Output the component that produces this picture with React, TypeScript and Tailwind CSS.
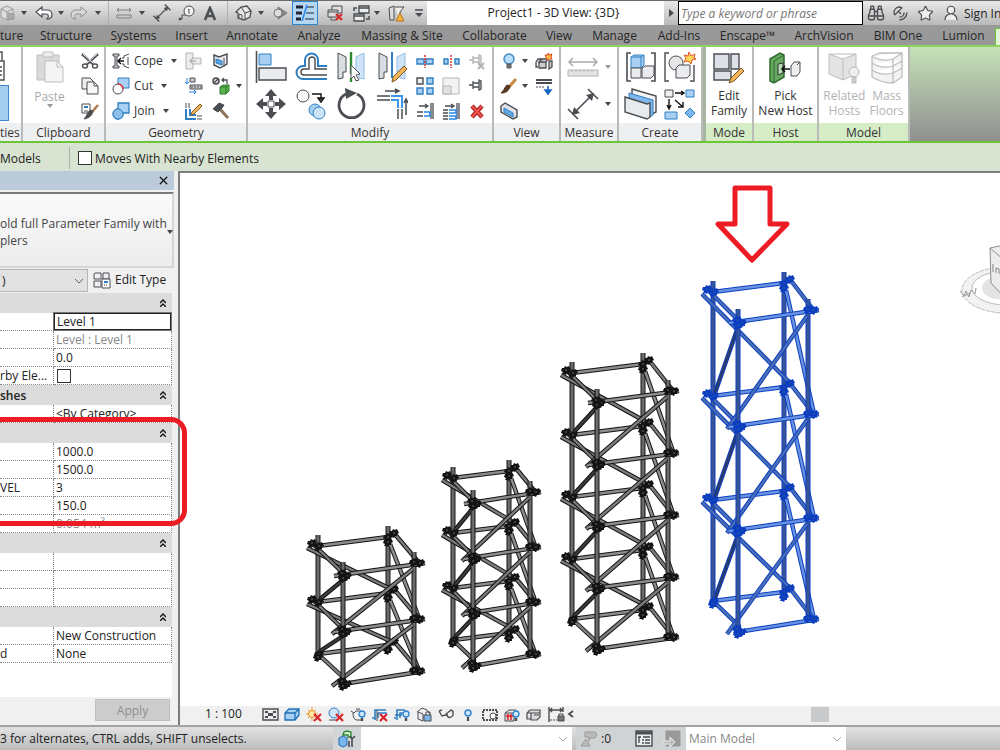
import React from 'react';
import { Star, UserRound, Binoculars, SatelliteDish, X } from 'lucide-react';

const INK = '#4a4d52';
const BLUE = '#2f7fc4';
const SKY = '#a9d0f2';
const PALE = '#e9ebee';
const OFF = '#b4b4b4';

interface IconProps {
    w?: number;
    h?: number;
    children: React.ReactNode;
}

const Icon: React.FC<IconProps> = ({ w = 16, h = w, children }) => (
    <svg width={w} height={h} viewBox={`0 0 ${w} ${h}`} fill="none" stroke={INK} className="shrink-0" aria-hidden="true">
        {children}
    </svg>
);

const Caret = ({ light = false }: { light?: boolean }) => (
    <svg width="6" height="4" viewBox="0 0 6 4" className="shrink-0" aria-hidden="true">
        <path d="M0 0h6L3 4z" fill={light ? '#9a9a9a' : '#444'} />
    </svg>
);

// --- Quick access icons ---
const BoxGrey = () => (
    <Icon>
        <path d="M7 1l6 3v8l-6 3-6-3V4z M1 4l6 3 6-3 M7 7v8" stroke="#999" fill="#ddd" />
        <path d="M8 8l6 1v5l-6 1z" fill="#aaa" stroke="#999" />
    </Icon>
);
const Undo = () => (
    <Icon w={18} h={14}>
        <path d="M1 6l6-5v3h5c3 0 5 2 5 5 0 2-1 3-3 4h-2c2-2 2-5-1-5H7v3z" fill="#fff" strokeWidth="1.2" />
    </Icon>
);
const Redo = () => (
    <Icon w={18} h={14}>
        <path d="M17 6l-6-5v3H6C3 4 1 6 1 9c0 2 1 3 3 4h2C4 11 4 8 7 8h4v3z" stroke="#8d8d8d" fill="#d8d8d8" />
    </Icon>
);
const MeasureGrey = () => (
    <Icon w={18} h={12}>
        <path d="M2 3h14M4 1L2 3l2 2M14 1l2 2-2 2M2 8h14v3H2z" stroke="#808080" />
    </Icon>
);
const Dimension = ({ size = 18 }: { size?: number }) => (
    <svg width={size} height={size} viewBox="0 0 32 32" fill="none" stroke={INK} strokeWidth={size > 20 ? 1.6 : 2.4} aria-hidden="true">
        <path d="M6 26L26 6M1 21l10 10M21 1l10 10" />
        <path d="M5 27l2-8 6 6zM27 5l-2 8-6-6z" fill={INK} stroke="none" />
    </svg>
);
const Tag = () => (
    <Icon w={18} h={16}>
        <path d="M1 14h3v-4h4" />
        <circle cx="11" cy="6" r="5" fill="#f3f3f3" />
        <path d="M10 5l1-1v5" />
        <circle cx="2" cy="14" r="1" fill={INK} />
    </Icon>
);
const LetterA = () => (
    <Icon w={14} h={15}>
        <path d="M2 14L7 2l5 12M4 10h6" strokeWidth="2.6" />
    </Icon>
);
const House = () => (
    <Icon w={17} h={16}>
        <path d="M1 7l5-5 6-1 4 5-1 6-6 3-6-2V8z" fill="#e8e8e8" strokeWidth="1.3" />
        <path d="M1 7l5-5 4 6v7M10 8l6-2M4 13V9l3 1v4" />
    </Icon>
);
const Section = () => (
    <Icon w={14} h={16}>
        <path d="M5 2l9 6-9 6z" fill="#888" stroke="#777" />
        <circle cx="5" cy="8" r="4" fill="#ddd" stroke="#777" />
    </Icon>
);
const ThinLines = () => (
    <Icon w={20} h={18}>
        <path d="M1 3h7M1 9h6M1 15h5" strokeWidth="3" stroke="#223" />
        <path d="M12 3h7M11 9h8M10 15h9" stroke="#223" />
        <path d="M12 1L7 17" stroke="#2585ea" strokeWidth="1.5" />
    </Icon>
);
const CloseWindows = () => (
    <Icon w={18} h={17}>
        <path d="M5 5V1h10v7h-3M1 5h10v7H1zM1 7h10M4 12v3h5" fill="#ddd" />
        <path d="M9 9l6 6M15 9l-6 6" stroke="#d92d2d" strokeWidth="2.4" />
    </Icon>
);
const SwitchWindows = () => (
    <Icon w={18} h={17}>
        <path d="M6 1h10v7H6zM1 9h10v7H1z" fill="#eee" strokeWidth="1.3" />
        <path d="M6 3h10M1 11h10M1 6V3h3M16 11v3h-3" strokeWidth="1.5" />
    </Icon>
);
const FilterWarn = () => (
    <Icon w={18} h={17}>
        <path d="M1 3l5-2v14H2z" fill="#ddd" />
        <path d="M7 2h9l-4 5v7" fill="#eee" />
        <path d="M12 8l4 8H8z" fill="#f7b23b" stroke="#b87414" />
    </Icon>
);

// --- Ribbon icons ---
const PasteIcon = () => (
    <Icon w={28} h={32}>
        <path d="M1 4h22v25H1z" fill="#d9d9d9" stroke="#bebebe" />
        <path d="M7 1h10v5H7z" fill="#eee" stroke="#bebebe" />
        <path d="M9 10h12l6 6v15H9z" fill="#f4f4f4" stroke="#bebebe" />
        <path d="M21 10v6h6" stroke="#bebebe" />
    </Icon>
);
const ScissorsIcon = () => (
    <Icon w={18}>
        <path d="M1 2l11 10M17 2L6 12" strokeWidth="2.4" />
        <path d="M2 2l10 9M16 2L6 11" stroke="#f4f4f4" />
        <ellipse cx="4" cy="14" rx="2.500" ry="2" strokeWidth="1.4" />
        <ellipse cx="14" cy="14" rx="2.500" ry="2" strokeWidth="1.4" />
    </Icon>
);
const CopyIcon = () => (
    <Icon w={18}>
        <path d="M1 1h8l3 3v8H1z" fill="#eee" />
        <path d="M6 5h7l4 4v8H6z" fill="#f7f7f7" />
        <path d="M13 5v4h4" />
    </Icon>
);
const MatchIcon = () => (
    <Icon w={18}>
        <path d="M1 2h8v9H1z" fill="#fff" />
        <path d="M3 4h4v2H3z" fill={BLUE} stroke="none" />
        <path d="M3 9h4" />
        <path d="M17 3l-6 7" strokeWidth="2.5" stroke="#b37a47" />
        <path d="M12 9c-1 5-4 7-9 8 3-3 3-6 6-9z" fill={INK} />
    </Icon>
);
const CopeIcon = () => (
    <Icon w={18}>
        <path d="M1 2h6v2H5v10h2v2H1v-2h2V4H1z" fill="#cfd2d6" />
        <path d="M17 2l-5 2v2h-2M10 12h2v2l5 2M16 5v8" />
        <path d="M6 9h6M9 6L6 9l3 3" stroke="#111" strokeWidth="1.4" />
    </Icon>
);
const CutIcon = () => (
    <Icon w={18}>
        <path d="M6 1h11v10H6z" fill={SKY} stroke={BLUE} />
        <circle cx="6" cy="12" r="5" fill="#fff" />
        <path d="M6 7a5 5 0 0 1 5 5" stroke="#e23030" strokeWidth="1.6" />
    </Icon>
);
const JoinIcon = () => (
    <Icon w={18}>
        <path d="M6 1h11v10h-6a5 5 0 1 1-5-4z" fill={SKY} stroke={BLUE} strokeWidth="1.3" />
        <circle cx="6" cy="12" r="5" fill="#8fc0ec" stroke={BLUE} />
    </Icon>
);
const CopeGrey = () => (
    <Icon w={18}>
        <path d="M1 1h7v5h8v6H8v5H1z" fill="#ededed" stroke={OFF} />
        <path d="M5 9h6M8 6L5 9l3 3" stroke={OFF} strokeWidth="1.4" />
    </Icon>
);
const SplitFace = () => (
    <Icon w={18}>
        <path d="M2 3l5 2 8-3v10l-7 4-6-3z" fill={PALE} strokeWidth="1.4" />
        <path d="M4 7l6 2v4l-6-2z" fill="#5aa5e6" stroke={BLUE} />
        <path d="M12 6v9" />
    </Icon>
);
const BeamJoin = () => (
    <Icon w={18}>
        <path d="M5 1h5v4H5zM5 8h12v4H5z" fill="#ccc" />
        <path d="M2 1v6M0 5l2 2 2-2M4 15h7M9 13l2 2-2 2" stroke="#2585ea" />
        <path d="M6 10h10" strokeDasharray="2 1" />
    </Icon>
);
const PaintIcon = () => (
    <Icon w={18}>
        <circle cx="4" cy="4" r="3" fill="#ddd" strokeWidth="1.5" />
        <path d="M2 6l4-4M10 3h5v4M12 1l-2 2 2 2" strokeWidth="1.3" />
        <path d="M8 10l3-2h6v6l-3 3H8z" fill="#5db34f" stroke="#2d7a28" />
        <path d="M8 10h6v7M14 10l3-2" stroke="#2d7a28" />
    </Icon>
);
const WallJoin = () => (
    <Icon w={18}>
        <path d="M1 1v5M4 1v5M12 14h5M12 17h5" />
        <path d="M1 7v10h10M5 7v6h6" stroke={BLUE} strokeWidth="2" />
        <path d="M15 2l2 2-8 8-3 1 1-3z" fill="#f1b55a" stroke="#8a5d22" />
    </Icon>
);
const HammerIcon = () => (
    <Icon w={18}>
        <path d="M8 7l8 9" stroke="#8b7358" strokeWidth="3" />
        <path d="M1 7l6-6 5 2-2 3-4 4z" fill={INK} />
    </Icon>
);

const AlignIcon = () => (
    <Icon w={32}>
        <path d="M1.500 0v32" strokeWidth="1.6" />
        <path d="M4 3h12v11H4z" fill={SKY} stroke={BLUE} />
        <path d="M4 17h27v12H4z" fill={PALE} strokeWidth="1.4" />
    </Icon>
);
const OffsetIcon = () => (
    <Icon w={32}>
        <path d="M32 28H8a6 6 0 0 1 0-13h2V9a6 6 0 0 1 13 0v6h9" strokeWidth="2" stroke={BLUE} />
        <path d="M32 24H9a3 3 0 0 1 0-6h5V9a3 3 0 0 1 6 0v9h12" strokeWidth="1.4" />
    </Icon>
);
const MirrorPick = () => (
    <Icon w={32}>
        <path d="M3 2l8 4v15H8v6l-5 1z" fill="#d9dce0" />
        <path d="M29 2l-8 4v15h3v6l5 1z" fill="#cfe5f7" stroke="#8fbde4" />
        <path d="M16 1v30" stroke="#2f8c2f" strokeWidth="2.4" strokeDasharray="22 4" />
        <path d="M16 14l9 9-4 1 3 5-3 1-2-5-3 3z" fill="#fff" />
    </Icon>
);
const MirrorDraw = () => (
    <Icon w={32}>
        <path d="M3 2l8 4v15H8v6l-5 1z" fill="#d9dce0" />
        <path d="M29 2l-8 4v15h3v6l5 1z" fill="#cfe5f7" stroke="#8fbde4" />
        <path d="M16 1v26" stroke={BLUE} strokeWidth="2" />
        <path d="M28 15l3 3-11 11-4 2 1-5z" fill="#f3b65b" stroke="#7c531e" />
    </Icon>
);
const MoveIcon = () => (
    <Icon w={32}>
        <path d="M16 1l6 7h-4v4h-4V8h-4zM16 31l6-7h-4v-4h-4v4h-4zM1 16l7-6v4h4v4H8v4zM31 16l-7-6v4h-4v4h4v4z" fill={INK} stroke="none" />
        <path d="M13 13h6v6h-6z" fill="#fff" />
    </Icon>
);
const CopyBig = () => (
    <Icon w={32}>
        <circle cx="8" cy="8" r="6" fill="#fafafa" />
        <path d="M17 6h9v6M23 10l3 4 3-4z" fill="none" stroke="#111" strokeWidth="1.4" />
        <circle cx="20" cy="22" r="6" fill={SKY} stroke={BLUE} />
        <circle cx="24" cy="25" r="6" fill="#cbe3f7" stroke={BLUE} />
    </Icon>
);
const RotateIcon = () => (
    <Icon w={32}>
        <path d="M22 6a12.500 12.500 0 1 1-11 0" strokeWidth="2.8" />
        <path d="M10 0l12 5-11 6z" fill={INK} stroke="none" />
    </Icon>
);
const TrimIcon = () => (
    <Icon w={32}>
        <path d="M9 3h13M19 1l4 2-4 2M1 8h13M1 12h13" strokeWidth="1.5" />
        <path d="M15 8h11v12M15 12h7v8" stroke="#3b97e8" strokeWidth="2" />
        <path d="M26 21v10M22 21v10M30 27V12M28 15l2-4 2 4" strokeWidth="1.5" />
    </Icon>
);
const SplitIcon = ({ gap = false }: { gap?: boolean }) => (
    <Icon w={18}>
        {gap ? (
            <path d="M2 7h4v5H2zM13 7h4v5h-4z" fill={SKY} stroke={BLUE} strokeWidth="1.4" />
        ) : (
            <path d="M1 7h7v5H1zM10 7h7v5h-7z" fill={SKY} stroke={BLUE} strokeWidth="1.4" />
        )}
        <path d="M9 3v13" stroke="#e23030" strokeWidth="1.5" strokeDasharray="2 1" />
    </Icon>
);
const PinIcon = ({ off = false }: { off?: boolean }) => (
    <Icon w={18}>
        <path d="M1 8h4M5 4v8M5 6h6M5 10h6M11 3l2 1v8l-2 1z" stroke={off ? OFF : INK} fill={off ? '#eee' : '#ddd'} strokeWidth="1.3" />
        {off && <path d="M10 11l6 6M16 11l-6 6" stroke={OFF} strokeWidth="2" />}
    </Icon>
);
const ArrayIcon = () => (
    <Icon w={18}>
        <path d="M1 1h6v6H1z" fill="#eee" strokeWidth="1.4" />
        <path d="M11 1h6v6h-6zM1 11h6v6H1zM11 11h6v6h-6z" fill={SKY} stroke={BLUE} strokeWidth="1.4" />
    </Icon>
);
const ScaleIcon = () => (
    <Icon w={18}>
        <path d="M1 1h16v16H1z" fill="#f3f3f3" stroke={OFF} />
        <path d="M1 9h8v8H1z" fill="#e2e2e2" stroke={OFF} />
    </Icon>
);
const ExtendIcon = ({ multi = false }: { multi?: boolean }) => (
    <Icon w={18}>
        <path d="M15 1v16M17 1v16M3 4h9M9 2l3 2-3 2" strokeWidth="1.3" />
        <path d={multi ? 'M1 8h5M1 11h5M1 14h5M1 17h5' : 'M1 10h6M1 14h6'} strokeWidth="1.3" />
        <path d={multi ? 'M7 8h7v3H7M7 14h7v3H7' : 'M8 10h6v4H8'} stroke="#2585ea" strokeWidth="1.6" />
    </Icon>
);
const DeleteIcon = () => (
    <Icon w={16}>
        <path d="M3 3l10 11M13 3L3 14" stroke="#a51c1c" strokeWidth="4.4" />
        <path d="M3 3l10 11M13 3L3 14" stroke="#ef5350" strokeWidth="2.4" />
    </Icon>
);

const BulbIcon = () => (
    <Icon w={18}>
        <circle cx="9" cy="7" r="5" fill="#b9dcf8" stroke="#3f87c6" strokeWidth="1.4" />
        <path d="M7 12h4v4H7z" fill="#777" stroke="#555" />
    </Icon>
);
const BrushIcon = () => (
    <Icon w={18}>
        <path d="M16 2l-7 8" stroke="#c88a45" strokeWidth="3" />
        <path d="M10 9c-1 5-4 7-9 7 3-2 3-5 6-8z" fill="#5a3d24" stroke="#4a2f18" />
    </Icon>
);
const ExplodeBox = () => (
    <Icon w={18}>
        <path d="M1 10l2-3h4M1 10v5h2M4 10l3-3h6l-2 3zM4 10h7v6H4zM14 9h3v6l-3 2z" fill="#ccc" strokeWidth="1.3" />
        <path d="M13 1l1 2 3-1-1 3 1 2-3 0-2 1-1-3-1-2 3 0z" fill="#f9c045" stroke="#e0431c" />
    </Icon>
);
const LineWork = () => (
    <Icon w={18}>
        <path d="M1 3h16M1 6h16" strokeWidth="2" />
        <path d="M1 10h8" strokeDasharray="2 1" />
        <path d="M13 9v5M10 13l3 4 3-4z" stroke="#1668c7" strokeWidth="1.6" fill="#1668c7" />
    </Icon>
);
const SelBox = () => (
    <Icon w={18}>
        <path d="M1 4l4-3 12 7v7l-4 2L1 10z" fill="#dfe3e8" strokeWidth="1.4" />
        <path d="M4 6l9 5v4L4 10z" fill="#62aaea" stroke={BLUE} />
    </Icon>
);
const RulerBig = () => (
    <Icon w={32}>
        <path d="M2 11h28M6 7l-4 4 4 4M26 7l4 4-4 4" stroke="#aaa" strokeWidth="1.5" />
        <path d="M1 19h30v6H1zM5 19v2M9 19v2M13 19v2M17 19v2M21 19v2M25 19v2" stroke={OFF} fill="#e4e4e4" />
    </Icon>
);
const GroupIcon = () => (
    <Icon w={32}>
        <path d="M6 2H2v28h4M26 2h4v28h-4" strokeWidth="1.6" />
        <path d="M6 6l3-2h10v10l-3 3H6zM6 6h10v11M16 6l3-2" fill={SKY} stroke={BLUE} />
        <path d="M6 17h10v10H6zM17 17l3-2h9v9l-3 3h-9z" fill={PALE} />
    </Icon>
);
const SimilarIcon = () => (
    <Icon w={32}>
        <path d="M5 2H1v28h4M26 30h4V14" strokeWidth="1.4" />
        <circle cx="12" cy="12" r="7" fill="#e6e6e6" />
        <path d="M12 17l3-3h11v10l-3 3H12z" fill={PALE} />
        <path d="M25 1l2 4 4-2-1 4 2 1-4 1-1 4-3-3-4 1 2-4-2-3 4 1z" fill="#ffd75a" stroke="#e0562c" />
    </Icon>
);
const AssemblyIcon = () => (
    <Icon w={34} h={32}>
        <path d="M8 1l24 7v16l-4 2L8 18z" fill="#f3f3f3" strokeWidth="1.4" />
        <path d="M5 5l24 7v15l-3 2L5 21z" fill="#7cb8ed" stroke={BLUE} />
        <path d="M1 9l22 7 3-1v14l-3 2L1 24z" fill="#e8ebee" strokeWidth="1.4" />
    </Icon>
);
const PartsIcon = () => (
    <Icon w={32}>
        <path d="M1 2h8v7H1z" fill="#eee" />
        <path d="M22 2h8v7h-8zM1 24h12v7H1z" fill={SKY} stroke={BLUE} />
        <path d="M26 20l5 5-5 5-5-5z" fill="#7cb8ed" stroke={BLUE} />
        <path d="M11 5h8M17 3l3 2-3 2M5 11v9M3 17l2 4 2-4M11 12l8 7M19 14v5h-5" stroke="#111" strokeWidth="1.4" />
    </Icon>
);
const EditFamilyIcon = () => (
    <Icon w={32}>
        <path d="M1 2h15v15H1zM18 2h8v15h-8zM1 19h17v9H1z" fill="#dde0e6" strokeWidth="1.4" />
        <path d="M28 16l3 3-10 10-5 2 2-5z" fill="#f3b65b" stroke="#7c531e" />
    </Icon>
);
const HostIcon = () => (
    <Icon w={34} h={32}>
        <path d="M2 7l10-6 4 2v22L6 31l-4-2z" fill="#67a863" stroke="#2f6b2e" strokeWidth="1.5" />
        <path d="M6 9l10-6M6 9v22" stroke="#2f6b2e" />
        <path d="M10 12l5-1v10l-5 2z" fill="#b8d9b4" stroke="#333" />
        <path d="M14 17h8M17 14l-3 3 3 3" stroke="#111" strokeWidth="1.6" />
        <path d="M23 14l3-4h6v10l-3 4h-6zM29 13l3-3" fill="#eee" />
    </Icon>
);
const RelatedIcon = () => (
    <Icon w={32}>
        <path d="M1 2l14 5 13-5v20l-13 6-14-6z" fill="#e3e3e3" stroke="#bdbdbd" />
        <path d="M1 2h27M15 7v21" stroke="#bdbdbd" />
        <circle cx="26" cy="20" r="5" fill="#eee" stroke="#bbb" />
        <path d="M24 25h4v6h-4z" fill="#ccc" stroke="#bbb" />
    </Icon>
);
const MassIcon = () => (
    <Icon w={32}>
        <path d="M1 4l8-3h22v24l-9 6C14 31 6 28 1 25zM1 4c6 4 14 5 21 3l9-6M22 7v24M1 11c6 4 14 5 21 3l9-5M1 18c6 4 14 5 21 3l9-5" fill="#f3f3f3" stroke="#bdbdbd" strokeWidth="1.3" />
    </Icon>
);

// --- Layout pieces ---
const Cell = ({ w, children }: { w: string; children?: React.ReactNode }) => (
    <button type="button" className={`${w} h-full flex shrink-0 items-center justify-center`}>
        {children}
    </button>
);

const Divider = ({ w }: { w: string }) => (
    <div className={`${w} flex h-full shrink-0 justify-center`}>
        <div className="w-px bg-[#b0b0b0]" />
    </div>
);

interface PanelProps {
    title: string;
    w: string;
    green?: boolean;
    children?: React.ReactNode;
}

const Panel: React.FC<PanelProps> = ({ title, w, green, children }) => (
    <section className={`${w} flex shrink-0 flex-col border-r-2 border-[#b9bbb9] bg-white`}>
        <div className="flex h-[77px] items-start justify-center pt-px">{children}</div>
        <h2 className={`h-[18px] overflow-hidden text-center leading-[20px] text-[#333] ${green ? 'bg-[#d5ecc7]' : 'bg-[#eeeff0]'}`}>
            {title}
        </h2>
    </section>
);

const Col = ({ w, children }: { w: string; children: React.ReactNode }) => (
    <div className={`${w} flex h-[75px] shrink-0 flex-col`}>
        {React.Children.map(children, (child) => (
            <div className="flex min-h-0 flex-1 items-center justify-center">{child}</div>
        ))}
    </div>
);

const Tool = ({ children }: { children: React.ReactNode }) => (
    <button type="button" className="flex items-center">
        {children}
    </button>
);

const BigTool = ({ icon, lines, off }: { icon: React.ReactNode; lines: string[]; off?: boolean }) => (
    <button type="button" className={`flex flex-col items-center pt-1 ${off ? 'text-[#b3b3b3]' : 'text-[#333]'}`}>
        <span className="mb-1">{icon}</span>
        {lines.map((line) => (
            <span key={line} className="leading-[15px] whitespace-nowrap">{line}</span>
        ))}
    </button>
);

const tabs = [
    { name: 'ture', w: 'w-[31px]' },
    { name: 'Structure', w: 'w-[70px]' },
    { name: 'Systems', w: 'w-[65px]' },
    { name: 'Insert', w: 'w-[51px]' },
    { name: 'Annotate', w: 'w-[70px]' },
    { name: 'Analyze', w: 'w-[64px]' },
    { name: 'Massing & Site', w: 'w-[102px]' },
    { name: 'Collaborate', w: 'w-[83px]' },
    { name: 'View', w: 'w-[46px]' },
    { name: 'Manage', w: 'w-[65px]' },
    { name: 'Add-Ins', w: 'w-[64px]' },
    { name: 'Enscape™', w: 'w-[73px]' },
    { name: 'ArchVision', w: 'w-[80px]' },
    { name: 'BIM One', w: 'w-[68px]' },
    { name: 'Lumion', w: 'w-[63px]' },
];

const TitleBar = () => (
    <header className="flex h-[25px] border-t border-[#6b6b6b] bg-linear-to-b from-[#e9e9e9] to-[#b9b9b9]">
        <Cell w="w-[16px]"><BoxGrey /></Cell>
        <Cell w="w-[16px]"><Caret /></Cell>
        <Cell w="w-[23px]"><Undo /></Cell>
        <Cell w="w-[12px]"><Caret /></Cell>
        <Cell w="w-[24px]"><Redo /></Cell>
        <Cell w="w-[14px]"><Caret /></Cell>
        <Divider w="w-[6px]" />
        <Cell w="w-[26px]"><MeasureGrey /></Cell>
        <Cell w="w-[10px]"><Caret /></Cell>
        <Cell w="w-[29px]"><Dimension /></Cell>
        <Cell w="w-[22px]"><Tag /></Cell>
        <Cell w="w-[24px]"><LetterA /></Cell>
        <Divider w="w-[10px]" />
        <Cell w="w-[22px]"><House /></Cell>
        <Cell w="w-[14px]"><Caret /></Cell>
        <Cell w="w-[24px]"><Section /></Cell>
        <Cell w="w-[26px] border border-[#2f84cf] bg-[#b5d6f2]"><ThinLines /></Cell>
        <Cell w="w-[36px]"><CloseWindows /></Cell>
        <Cell w="w-[16px]"><SwitchWindows /></Cell>
        <Cell w="w-[14px]"><Caret /></Cell>
        <Cell w="w-[26px]"><FilterWarn /></Cell>
        <Cell w="w-[17px]">
            <Icon w={8} h={8}><path d="M0 1h8" strokeWidth="1.5" /><path d="M0 4h8L4 8z" fill={INK} stroke="none" /></Icon>
        </Cell>
        <h1 className="min-w-0 flex-1 bg-white pl-4 text-center leading-[23px] whitespace-nowrap text-[#222]">Project1 - 3D View: {'{3D}'}</h1>
        <Cell w="w-[14px]">
            <Icon w={5} h={8}><path d="M0 0l5 4-5 4z" fill={INK} stroke="none" /></Icon>
        </Cell>
        <input
            aria-label="Search help"
            placeholder="Type a keyword or phrase"
            className="w-[185px] shrink-0 border border-black bg-white px-[2px] italic outline-none placeholder:text-[#777]"
        />
        <Cell w="w-[25px]"><Binoculars size={18} strokeWidth={1.8} color={INK} /></Cell>
        <Cell w="w-[25px]"><SatelliteDish size={17} strokeWidth={1.8} color={INK} className="rotate-90" /></Cell>
        <Cell w="w-[25px]"><Star size={17} strokeWidth={1.6} color={INK} fill="#eee" /></Cell>
        <Cell w="w-[25px]"><UserRound size={18} strokeWidth={1.6} color={INK} fill="#eee" /></Cell>
        <button type="button" className="w-[37px] shrink-0 overflow-hidden pl-px text-left whitespace-nowrap text-[#222]">Sign In</button>
    </header>
);

const Ribbon = () => (
    <div className="flex h-[98px] border-y-2 border-t-[#8cd45f] border-b-[#6cc534] bg-linear-to-b from-[#c5e2b6] to-[#8f8f8f]">
        <section className="flex w-[23px] shrink-0 flex-col border-r-2 border-[#b9bbb9] bg-white">
            <div className="flex h-[77px] flex-col">
                <Icon w={12} h={38}>
                    <path d="M0 5h2v8M0 14h4v19H0M0 20h2M0 24h2M0 28h2" strokeWidth="1.4" />
                </Icon>
                <button type="button" aria-label="Properties" className="h-[36px] w-[9px] border border-l-0 border-[#3b8ad0] bg-[#a5cdf0]" />
            </div>
            <h2 className="h-[18px] overflow-hidden bg-[#eeeff0] text-left leading-[20px] text-[#333]">ties</h2>
        </section>
        <Panel title="Clipboard" w="w-[83px]">
            <div className="flex w-[52px] justify-center">
                <button type="button" className="flex flex-col items-center pt-[3px] text-[#a9a9a9]">
                    <PasteIcon />
                    <span className="mt-[6px] leading-[15px]">Paste</span>
                    <Caret light />
                </button>
            </div>
            <Col w="w-[28px]">
                <Tool><ScissorsIcon /></Tool>
                <Tool><CopyIcon /></Tool>
                <Tool><MatchIcon /></Tool>
            </Col>
        </Panel>
        <Panel title="Geometry" w="w-[142px]">
            <div className="flex h-[75px] w-[72px] shrink-0 flex-col pl-[4px] text-[#333]">
                {[
                    { name: 'Cope', icon: <CopeIcon /> },
                    { name: 'Cut', icon: <CutIcon /> },
                    { name: 'Join', icon: <JoinIcon /> },
                ].map((item) => (
                    <button key={item.name} type="button" className="flex h-[25px] items-center gap-1">
                        {item.icon}
                        <span className="pr-1">{item.name}</span>
                        <Caret />
                    </button>
                ))}
            </div>
            <Col w="w-[28px]">
                <Tool><CopeGrey /></Tool>
                <Tool><BeamJoin /></Tool>
                <Tool><WallJoin /></Tool>
            </Col>
            <Col w="w-[26px]">
                <Tool><SplitFace /></Tool>
                <Tool><PaintIcon /></Tool>
                <Tool><HammerIcon /></Tool>
            </Col>
            <Col w="w-[10px]"><Caret /></Col>
        </Panel>
        <Panel title="Modify" w="w-[246px]">
            <Col w="w-[41px]"><Tool><AlignIcon /></Tool><Tool><MoveIcon /></Tool></Col>
            <Col w="w-[40px]"><Tool><OffsetIcon /></Tool><Tool><CopyBig /></Tool></Col>
            <Col w="w-[40px]"><Tool><MirrorPick /></Tool><Tool><RotateIcon /></Tool></Col>
            <Col w="w-[41px]"><Tool><MirrorDraw /></Tool><Tool><TrimIcon /></Tool></Col>
            <Col w="w-[26px]"><Tool><SplitIcon /></Tool><Tool><ArrayIcon /></Tool><Tool><ExtendIcon /></Tool></Col>
            <Col w="w-[26px]"><Tool><SplitIcon gap /></Tool><Tool><ScaleIcon /></Tool><Tool><ExtendIcon multi /></Tool></Col>
            <Col w="w-[26px]"><Tool><PinIcon off /></Tool><Tool><PinIcon /></Tool><Tool><DeleteIcon /></Tool></Col>
        </Panel>
        <Panel title="View" w="w-[67px]">
            <div className="flex h-[75px] w-[35px] shrink-0 flex-col pl-1">
                <button type="button" className="flex h-[25px] items-center gap-1"><BulbIcon /><Caret /></button>
                <button type="button" className="flex h-[25px] items-center gap-1"><BrushIcon /><Caret /></button>
                <button type="button" className="flex h-[25px] items-center"><SelBox /></button>
            </div>
            <Col w="w-[26px]">
                <Tool><ExplodeBox /></Tool>
                <Tool><LineWork /></Tool>
                <span />
            </Col>
        </Panel>
        <Panel title="Measure" w="w-[58px]">
            <Col w="w-[38px]"><Tool><RulerBig /></Tool><Tool><Dimension size={32} /></Tool></Col>
            <Col w="w-[12px]"><Caret light /><Caret /></Col>
        </Panel>
        <Panel title="Create" w="w-[84px]">
            <Col w="w-[40px]"><Tool><GroupIcon /></Tool><Tool><AssemblyIcon /></Tool></Col>
            <Col w="w-[38px]"><Tool><SimilarIcon /></Tool><Tool><PartsIcon /></Tool></Col>
        </Panel>
        <div className="w-[3px] shrink-0 bg-[#a9b5a3]" />
        <Panel title="Mode" w="w-[48px]" green>
            <BigTool icon={<EditFamilyIcon />} lines={['Edit', 'Family']} />
        </Panel>
        <Panel title="Host" w="w-[65px]" green>
            <BigTool icon={<HostIcon />} lines={['Pick', 'New Host']} />
        </Panel>
        <Panel title="Model" w="w-[91px]" green>
            <div className="flex gap-1">
                <BigTool icon={<RelatedIcon />} lines={['Related', 'Hosts']} off />
                <BigTool icon={<MassIcon />} lines={['Mass', 'Floors']} off />
            </div>
        </Panel>
    </div>
);

// --- Properties palette ---
interface Row {
    head?: boolean;
    name?: string;
    value?: React.ReactNode;
    muted?: boolean;
}

const rows: Row[] = [
    { head: true },
    { value: 'level' },
    { value: 'Level : Level 1', muted: true },
    { value: '0.0' },
    { name: 'rby Ele...', value: 'check' },
    { head: true, name: 'shes' },
    { value: '<By Category>' },
    { head: true },
    { value: '1000.0' },
    { value: '1500.0' },
    { name: 'VEL', value: '3' },
    { value: '150.0' },
    { value: '0.054 m³', muted: true },
    { head: true },
    {},
    {},
    {},
    { head: true },
    { value: 'New Construction' },
    { name: 'd', value: 'None' },
];

const DoubleChevron = () => (
    <svg width="6" height="8" viewBox="0 0 6 8" fill="none" stroke="#111" strokeWidth="1.4" aria-hidden="true">
        <path d="M0 4l3-3 3 3M0 8l3-3 3 3" />
    </svg>
);

const PropertyValue = ({ value }: { value: React.ReactNode }) => {
    if (value === 'level') {
        return <input aria-label="Schedule level" defaultValue="Level 1" className="block h-[17px] w-full border border-[#222] bg-white px-[2px] outline outline-[#777]" />;
    }
    if (value === 'check') {
        return <input type="checkbox" aria-label="Moves with nearby elements" className="ml-[3px] block size-[14px] appearance-none border border-[#333] bg-white" />;
    }
    return <div className="h-[17px] overflow-hidden pl-[2px] leading-[17px] whitespace-nowrap">{value}</div>;
};

const Properties = () => (
    <aside className="flex w-[180px] shrink-0 flex-col border-r-2 border-[#7d7d7d] bg-[#f0f0f0]">
        <div className="flex w-[174px] flex-1 flex-col">
            <div className="flex h-[19px] shrink-0 items-center justify-end bg-[#bccbda] pr-1">
                <button type="button" aria-label="Close"><X size={13} strokeWidth={2.4} color="#111" /></button>
            </div>
            <button type="button" className="mt-[2px] flex h-[76px] shrink-0 items-center justify-between border-2 border-l-0 border-t-[#7a7a7a] border-r-[#d5d5d5] border-b-[#d5d5d5] bg-linear-to-b from-[#fbfbfb] to-[#ececec] pt-[3px] text-left text-[#444]">
                <span className="leading-[17px] whitespace-nowrap">old full Parameter Family with<br />plers</span>
                <Caret />
            </button>
            <div className="flex h-[25px] shrink-0 items-center">
                <div className="relative">
                    <select aria-label="Instance" className="block h-[23px] w-[88px] appearance-none border border-l-0 border-[#b5b5b5] bg-[#e1e1e1] pl-[2px] outline-none">
                        <option>)</option>
                    </select>
                    <svg width="10" height="6" viewBox="0 0 10 6" fill="none" stroke="#666" className="pointer-events-none absolute top-[9px] right-[4px]" aria-hidden="true">
                        <path d="M1 1l4 4 4-4" />
                    </svg>
                </div>
                <button type="button" className="flex items-center gap-1 pb-[2px] pl-[5px] whitespace-nowrap">
                    <Icon w={18}>
                        <path d="M2 2h6v6H1V3zM10 2h6v6h-6zM1 10h7v6H1z" fill="#eee" />
                        <path d="M9 8h8v9H9z" fill="#fff" />
                        <path d="M11 10h4v2h-4z" fill={BLUE} stroke="none" />
                        <path d="M11 14h4" strokeDasharray="1 1" />
                    </Icon>
                    Edit Type
                </button>
            </div>
            <table className="w-[172px] table-fixed border-separate border-spacing-0 bg-white text-[#222]">
                <colgroup>
                    <col className="w-[54px]" />
                    <col />
                </colgroup>
                <tbody>
                    {rows.map((row, i) =>
                        row.head ? (
                            <tr key={i} className="h-[20px] bg-[#dcdcdc]">
                                <th colSpan={2} className="p-0 font-semibold">
                                    <div className="flex items-center justify-between pr-[6px] leading-[17px]">
                                        <span>{row.name}</span>
                                        <button type="button" aria-label="Collapse group"><DoubleChevron /></button>
                                    </div>
                                </th>
                            </tr>
                        ) : (
                            <tr key={i} className="h-[18px]">
                                <td className="border-r border-b border-dotted border-[#888] p-0 leading-[17px] whitespace-nowrap">{row.name}</td>
                                <td className={`border-r border-b border-dotted border-[#888] p-0 ${row.muted ? 'text-[#888]' : ''}`}>
                                    <PropertyValue value={row.value} />
                                </td>
                            </tr>
                        )
                    )}
                </tbody>
            </table>
            <div className="w-[172px] flex-1 bg-white" />
            <div className="flex h-[28px] shrink-0 items-center justify-end pr-1 pb-[2px]">
                <button type="button" disabled className="h-[22px] w-[75px] border border-[#bfbfbf] bg-[#cccccc] text-[#8f8f8f]">Apply</button>
            </div>
        </div>
    </aside>
);

// --- Scaffold model ---
type Point = [number, number];

interface TowerProps {
    a: Point; // rear left joint
    b: Point; // rear right joint
    c: Point; // front left joint
    d: Point; // front right joint
    levels: number;
    pitch: number;
    drop: number; // how much shorter the lowest bay is
    selected?: boolean;
}

const Tower: React.FC<TowerProps> = ({ a, b, c, d, levels, pitch, drop, selected }) => {
    const edge = selected ? '#0b3fc0' : '#141414';
    const fill = selected ? '#6a92e2' : '#8c8c8c';
    const shade = selected ? '#3a5596' : '#6a6a6a';
    const brace = selected ? '#4a6fb8' : '#7c7c7c';
    const dark = selected ? '#2c3c6c' : '#3a3a3a';

    const pipe = (key: string, x1: number, y1: number, x2: number, y2: number, color = fill, w = 4.4) => (
        <g key={key}>
            <path d={`M${x1} ${y1}L${x2} ${y2}`} stroke={edge} strokeWidth={w} />
            <path d={`M${x1} ${y1}L${x2} ${y2}`} stroke={color} strokeWidth={w - 2} />
        </g>
    );

    const clamp = (key: string, x: number, y: number) => (
        <g key={key}>
            <path d={`M${x - 4} ${y - 2}l2 0 1-2 2 1 2-1 1 2 1 2-2 1 0 2-2 0-1 2-2-1-2 0 1-2-2-1z`} fill={edge} />
            <path d={`M${x - 1} ${y}h2`} stroke={shade} />
        </g>
    );

    const foot = levels * pitch - drop;
    const steps = Array.from({ length: levels + 1 }, (_, i) => (i === levels ? foot : i * pitch));

    return (
        <g fill="none">
            {pipe('pa', a[0], a[1] - 11, a[0], a[1] + foot + 2, shade, 5)}
            {pipe('pb', b[0], b[1] - 11, b[0], b[1] + foot + 2, shade, 5)}
            {steps.map((y, i) => {
                const next = steps[i + 1];
                const base = next === undefined;
                return (
                    <g key={`back${i}`}>
                        {pipe('ab', a[0], a[1] + y, b[0], b[1] + y)}
                        {!base && pipe('bd', b[0] + 2, b[1] + y + 7, d[0] + 7, d[1] + next + 2)}
                        {!base && pipe('ca', c[0], c[1] + y + 5, a[0] + 2, a[1] + next - 3, dark)}
                        {!base && pipe('ad', a[0] - 11, a[1] + y + 2, b[0] + 9, b[1] + next - 1, brace)}
                        {pipe('bdh', b[0] + 5, b[1] + y - 5, d[0] + 7, d[1] + y, brace)}
                        {base
                            ? pipe('ac0', a[0], a[1] + y, c[0] + 2, c[1] + y - 4, brace)
                            : pipe('ac', a[0] - 7, a[1] + y - 4, c[0] + 2, c[1] + y, brace)}
                        {clamp('ka', a[0] + 1, a[1] + y)}
                        {base ? clamp('ka3', a[0], a[1] + y + 3) : clamp('ka2', a[0] - 6, a[1] + y - 3)}
                        {clamp('kb', b[0], b[1] + y)}
                        {clamp('kb1', b[0], b[1] + y + 5)}
                        {clamp('kb2', b[0] + 6, b[1] + y - 4)}
                    </g>
                );
            })}
            {pipe('pd', d[0], d[1] - 13, d[0], d[1] + foot + 2, shade, 5)}
            {steps.slice(1).map((next, i) => (
                <g key={`brace${i}`}>{pipe('dc', d[0] - 1, d[1] + steps[i] + 4, c[0] - 11, c[1] + next + 3, brace)}</g>
            ))}
            {pipe('pc', c[0], c[1] - 13, c[0], c[1] + foot + 2, shade, 5)}
            {steps.map((y, i) => (
                <g key={`front${i}`}>
                    {pipe('cd', c[0] - (i < levels ? 9 : 0), c[1] + y + 1, d[0] + 11, d[1] + y - 2)}
                    {clamp('kc', c[0] - 1, c[1] + y - 2)}
                    {clamp('kc2', c[0] + 4, c[1] + y + 1)}
                    {clamp('kc3', c[0], c[1] + y + 3)}
                    {clamp('kd', d[0], d[1] + y - 3)}
                    {clamp('kd2', d[0] + 6, d[1] + y - 2)}
                </g>
            ))}
        </g>
    );
};

const Scene = () => (
    <svg className="block h-full w-full" role="img" aria-label="3D view of four scaffold towers">
        <g transform="translate(-180 -173)">
            <Tower a={[318, 546]} b={[388, 537]} c={[343, 575]} d={[414, 565]} levels={2} pitch={56} drop={4} />
            <Tower a={[453, 478]} b={[509, 471]} c={[473, 503]} d={[530, 494]} levels={3} pitch={55} drop={3} />
            <Tower a={[572, 373]} b={[643, 364]} c={[597, 402]} d={[668, 393]} levels={4} pitch={62} drop={2} />
            <Tower a={[713, 292]} b={[784, 283]} c={[738, 322]} d={[808, 312]} levels={3} pitch={104} drop={3} selected />
            <path d="M735 188h35v36h17l-35 36-34-36h17z" fill="none" stroke="#ed1c24" strokeWidth="5" strokeLinejoin="round" />
            {/* View cube */}
            <ellipse cx="1006" cy="290" rx="44" ry="23" fill="#f2f2f2" stroke="#b9b9b9" strokeDasharray="4 1" />
            <ellipse cx="1006" cy="288" rx="34" ry="17" fill="#fff" stroke="#bcbcbc" />
            <ellipse cx="998" cy="288" rx="16" ry="11" fill="#e4e4e4" />
            <path d="M990 248l14-3v52l-13-14z" fill="#ececec" stroke="#8d8d8d" />
            <path d="M990 248l14 12" stroke="#8d8d8d" />
            <path d="M993 264v8M996 268l3 1v5M996 268v5" stroke="#888" fill="none" />
            <path d="M960 291l4 5 2-5 3 6 2-7 4 4 1-6M962 297l8-4" stroke="#999" fill="none" />
        </g>
    </svg>
);

// --- View control bar ---
const RedCross = () => <path d="M8 7l7 7M15 7l-7 7" stroke="#d8262c" strokeWidth="2.2" />;
const SmallBulb = () => (
    <>
        <circle cx="12" cy="7" r="3" fill="#cfe6fb" stroke="#2d82cf" strokeWidth="1.3" />
        <path d="M12 11v3" strokeWidth="2.4" />
    </>
);

const viewControls: { name: string; art: React.ReactNode }[] = [
    { name: 'Detail level', art: <><path d="M1 2h15v11H1z" fill="#eee" strokeWidth="1.4" /><path d="M3 4h3v2H3zM11 4h3v2h-3zM3 9h3v2H3zM11 9h3v2h-3zM6 6h5v3H6z" fill={INK} stroke="none" /></> },
    { name: 'Visual style', art: <path d="M1 6l4-4h10v6l-4 5H1zM1 6h10v7M11 6l4-4" fill={SKY} stroke="#1f70b8" strokeWidth="1.3" /> },
    { name: 'Sun path', art: <><path d="M6 0v14M0 7h12M2 3l9 8M10 3l-8 8" stroke="#f0962a" /><circle cx="6" cy="7" r="3.500" fill="#ffe9a8" stroke="#e58a1d" /><RedCross /></> },
    { name: 'Shadows', art: <><circle cx="6" cy="6" r="5" fill="#cfe4f7" stroke={BLUE} /><path d="M1 13h8" /><RedCross /></> },
    { name: 'Rendering', art: <><path d="M1 4l3 2 2-2h5M3 6c0 4 1 6 3 7h5M6 2h4" /><SmallBulb /></> },
    { name: 'Crop view', art: <><path d="M0 11h3M3 13V3h11M6 11V6h9" stroke={BLUE} strokeWidth="1.6" /><path d="M5 3v11" /><RedCross /></> },
    { name: 'Crop region', art: <><path d="M0 11h2M3 13V3h8M6 11V6h3M1 8h7" stroke={BLUE} strokeWidth="1.6" /><SmallBulb /></> },
    { name: 'Locked 3D view', art: <><path d="M1 5l5-4 5 2 3 4M2 5v7l5 2V7L2 5" /><path d="M8 8h7v6H8z" fill="#7cb8ed" /><path d="M10 8V5h4v3" /></> },
    { name: 'Hide/isolate', art: <path d="M1 4l3-1M1 4l3 5 4-1V7l5-4 2 1M9 7c0 4 4 5 6 1V4" strokeWidth="1.4" /> },
    { name: 'Reveal hidden', art: <><circle cx="8" cy="6" r="3" fill="#cfe6fb" stroke="#2d82cf" strokeWidth="1.4" /><path d="M8 10v4" strokeWidth="2.2" /></> },
    { name: 'Worksharing', art: <><path d="M1 3h14v10H1z" strokeDasharray="2 1" strokeWidth="2" /><circle cx="11" cy="9" r="3" fill="#fff" /></> },
    { name: 'Temporary properties', art: <><path d="M1 6l4-3h7M1 6v8h9V6z" fill="#ddd" /><path d="M2 9h7M4 7v6M7 7v6" stroke="#d8262c" strokeWidth="1.5" /><SmallBulb /></> },
    { name: 'Analytical model', art: <path d="M1 6l3-3h10v7l-3 3H5V6h9M1 6h4M1 6v6h4M8 8h5" fill="#ddd" strokeWidth="1.2" /> },
    { name: 'Constraints', art: <><path d="M1 0v15M15 0v5M2 3h12M4 1L2 3l2 2M12 1l2 2-2 2" strokeWidth="1.4" /><path d="M2 13h7" strokeDasharray="2 1" /><path d="M10 9h6v5h-6z" fill="#777" /><path d="M11 9V7h4v2" /></> },
];

const ViewControlBar = () => (
    <div className="flex h-[19px] shrink-0 items-center bg-[#f0f0f0] pb-[3px]">
        <button type="button" className="w-[79px] shrink-0 pl-[25px] text-left leading-[16px] whitespace-nowrap">1 : 100</button>
        {viewControls.map((item) => (
            <button key={item.name} type="button" aria-label={item.name} className="flex w-[22px] shrink-0 justify-center">
                <Icon w={17} h={15}>{item.art}</Icon>
            </button>
        ))}
        <button type="button" aria-label="Scroll left" className="w-[10px] shrink-0">
            <Icon w={8} h={8}><path d="M6 1L2 4l4 3" strokeWidth="1.8" /></Icon>
        </button>
        <div className="flex h-[15px] flex-1 justify-center pl-[63px]">
            <div className="w-[18px] bg-[#c9cacc]" />
        </div>
    </div>
);

const StatusBar = () => (
    <footer className="flex h-[25px] shrink-0 items-stretch border-t-2 border-[#a3a3a3] bg-linear-to-b from-[#e2e2e2] to-[#bcbcbc] text-[#222]">
        <p className="w-[333px] shrink-0 overflow-hidden leading-[24px] whitespace-nowrap">3 for alternates, CTRL adds, SHIFT unselects.</p>
        <button type="button" aria-label="Worksets" className="flex w-[28px] shrink-0 items-center justify-center bg-[#d3d6d8]">
            <Icon w={18}>
                <path d="M1 8l4-2 4 2v7l-4 2-4-2z" fill="#79b7ee" stroke="#1f6fb5" />
                <path d="M5 5l1-3 3-1 4 1v5h-3V5z" fill="#d6efd3" stroke="#2e8a37" strokeWidth="1.4" />
                <path d="M14 17V9l-2-3M14 9l3-3M11 17v-6" strokeWidth="1.6" />
            </Icon>
        </button>
        <div className="relative w-[211px] shrink-0">
            <select aria-label="Active workset" className="block h-full w-full appearance-none bg-white outline-none"><option></option></select>
            <svg width="10" height="6" viewBox="0 0 10 6" fill="none" stroke="#aaa" className="pointer-events-none absolute top-[9px] right-[4px]" aria-hidden="true"><path d="M1 1l4 4 4-4" /></svg>
        </div>
        <button type="button" className="ml-1 flex w-[54px] shrink-0 items-center gap-[3px] bg-[#d0d3d4] pl-1">
            <Icon w={18}>
                <path d="M5 2h10l2 2-2 4h-5l-1 3V7H5zM6 9l4 7H1z" fill="#bbb" stroke="#999" />
            </Icon>
            :0
        </button>
        <button type="button" aria-label="Design options" className="flex w-[27px] shrink-0 items-center justify-center bg-[#d0d3d4]">
            <Icon w={18}>
                <path d="M1 1h16v15H1z" fill="#eee" strokeWidth="1.4" />
                <path d="M1 3h16" strokeWidth="3" />
                <path d="M3 7h3M8 7h7M7 10h2M10 10h5M7 13h2M10 13h5M4 7v6" strokeWidth="1.4" />
            </Icon>
        </button>
        <button type="button" aria-label="Add to set" className="flex w-[29px] shrink-0 items-center justify-center bg-[#d0d3d4]">
            <Icon w={18}>
                <path d="M3 1h14v15H3z" fill="#999" stroke="#999" />
                <path d="M0 11h7V7l5 5-5 5v-3H0z" fill="#bbb" stroke="#eee" />
            </Icon>
        </button>
        <div className="relative w-[160px] shrink-0">
            <select aria-label="Design option" className="block h-full w-full appearance-none bg-white pl-[3px] text-[#888] outline-none"><option>Main Model</option></select>
            <svg width="10" height="6" viewBox="0 0 10 6" fill="none" stroke="#aaa" className="pointer-events-none absolute top-[9px] right-[4px]" aria-hidden="true"><path d="M1 1l4 4 4-4" /></svg>
        </div>
    </footer>
);

const App: React.FC = () => {
    return (
        <div className="flex min-h-screen flex-col overflow-hidden bg-[#f0f0f0] font-['Open_Sans','Noto_Sans',sans-serif] text-[12px] leading-[17px] text-[#222]">
            <TitleBar />

            <nav className="flex h-[20px] shrink-0 bg-[#999999] text-[#262626]">
                {tabs.map((tab) => (
                    <a key={tab.name} href="#" className={`${tab.w} shrink-0 text-center leading-[22px] whitespace-nowrap first:pr-[10px]`}>
                        {tab.name}
                    </a>
                ))}
                <a href="#" aria-label="Modify" className="mt-[3px] flex-1 border-t border-l border-[#6cc534] bg-[#e3f3da]" />
            </nav>

            <Ribbon />

            {/* Options bar */}
            <div className="flex h-[28px] shrink-0 items-center bg-[#d8e4d1] pt-[2px]">
                <span className="w-[69px] shrink-0">Models</span>
                <div className="h-[22px] w-px bg-[#a9b2a4]" />
                <label className="flex items-center gap-[3px] pl-2">
                    <input type="checkbox" className="size-[14px] appearance-none border border-[#333] bg-white" />
                    Moves With Nearby Elements
                </label>
            </div>

            <main className="relative flex flex-1">
                <Properties />
                <div className="flex min-w-0 flex-1 flex-col border-t-2 border-[#7d7d7d]">
                    <div className="min-h-0 flex-1 bg-white">
                        <Scene />
                    </div>
                    <ViewControlBar />
                </div>
                {/* Markup around the edited parameters */}
                <div className="pointer-events-none absolute top-[246px] -left-5 h-[109px] w-[207px] rounded-[16px] border-[5px] border-[#ed1c24]" />
            </main>

            <StatusBar />
        </div>
    );
};

export default App;
